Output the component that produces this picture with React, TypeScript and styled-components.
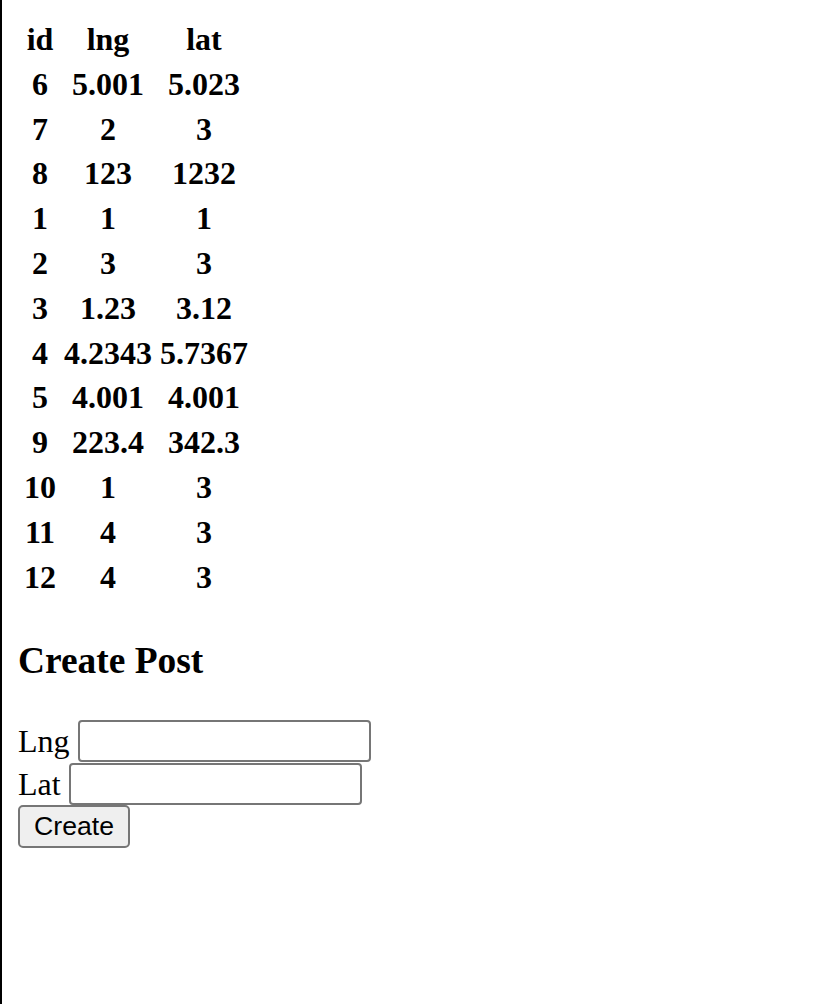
import React from "react";
import styled, { createGlobalStyle } from "styled-components";

const GlobalStyle = createGlobalStyle`
  html {
    min-height: 100vh;
    border-left: 2px solid #000;
    background: #fff;
  }
  body {
    margin: 16px;
    font-family: "Liberation Serif", "Times New Roman", serif;
    font-size: 32px;
    color: #000;
  }
`;

const Table = styled.table`
  border-collapse: separate;
  border-spacing: 4px;
  margin-top: -1px;
  font-family: "Liberation Serif", "Times New Roman", serif;
  font-size: 32px;
  line-height: 36.8px;
`;

const HeadCell = styled.th`
  padding: 2px;
  font-weight: bold;
  text-align: center;
`;

const Cell = styled.td`
  padding: 2px;
  font-weight: bold;
  text-align: center;
`;

const Title = styled.h3`
  font-size: 37.44px;
  font-weight: bold;
  margin: 37.44px 0;
`;

const Form = styled.form`
  display: flex;
  flex-direction: column;
  align-items: flex-start;
`;

const Field = styled.div`
  display: flex;
  align-items: center;
  gap: 8px;
  height: 43px;
`;

const Label = styled.label`
  font-size: 32px;
  line-height: 1;
`;

const Input = styled.input`
  box-sizing: border-box;
  width: 293px;
  height: 42px;
  border: 2px solid #767676;
  border-radius: 4px;
  padding: 2px 4px;
  font-family: "Liberation Sans", Arial, sans-serif;
  font-size: 26.67px;
  background: #fff;
`;

const Button = styled.button`
  box-sizing: border-box;
  height: 43px;
  padding: 0 14px;
  border: 2px solid #767676;
  border-radius: 5px;
  background: #efefef;
  font-family: "Liberation Sans", Arial, sans-serif;
  font-size: 26.67px;
  color: #000;
`;

const rows: [string, string, string][] = [
  ["6", "5.001", "5.023"],
  ["7", "2", "3"],
  ["8", "123", "1232"],
  ["1", "1", "1"],
  ["2", "3", "3"],
  ["3", "1.23", "3.12"],
  ["4", "4.2343", "5.7367"],
  ["5", "4.001", "4.001"],
  ["9", "223.4", "342.3"],
  ["10", "1", "3"],
  ["11", "4", "3"],
  ["12", "4", "3"],
];

export default function App() {
  return (
    <>
      <GlobalStyle />
      <Table>
        <thead>
          <tr>
            <HeadCell>id</HeadCell>
            <HeadCell>lng</HeadCell>
            <HeadCell>lat</HeadCell>
          </tr>
        </thead>
        <tbody>
          {rows.map((r) => (
            <tr key={r[0]}>
              <Cell>{r[0]}</Cell>
              <Cell>{r[1]}</Cell>
              <Cell>{r[2]}</Cell>
            </tr>
          ))}
        </tbody>
      </Table>
      <Title>Create Post</Title>
      <Form onSubmit={(e) => e.preventDefault()}>
        <Field>
          <Label htmlFor="lng">Lng</Label>
          <Input id="lng" type="text" />
        </Field>
        <Field>
          <Label htmlFor="lat">Lat</Label>
          <Input id="lat" type="text" />
        </Field>
        <Button type="submit">Create</Button>
      </Form>
    </>
  );
}
